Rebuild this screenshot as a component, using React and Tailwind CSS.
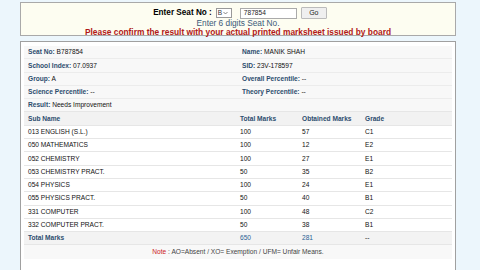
import React from "react";

const info = [
  [["Seat No:", "B787854"], ["Name:", "MANIK SHAH"]],
  [["School Index:", "07.0937"], ["SID:", "23V-178597"]],
  [["Group:", "A"], ["Overall Percentile:", "--"]],
  [["Science Percentile:", "--"], ["Theory Percentile:", "--"]],
];

const subjects = [
  ["013 ENGLISH (S.L.)", "100", "57", "C1"],
  ["050 MATHEMATICS", "100", "12", "E2"],
  ["052 CHEMISTRY", "100", "27", "E1"],
  ["053 CHEMISTRY PRACT.", "50", "35", "B2"],
  ["054 PHYSICS", "100", "24", "E1"],
  ["055 PHYSICS PRACT.", "50", "40", "B1"],
  ["331 COMPUTER", "100", "48", "C2"],
  ["332 COMPUTER PRACT.", "50", "38", "B1"],
];

const grid = "grid grid-cols-[212px_62px_63px_1fr] items-center h-[13.3px] border-b border-[#e6e6e6]";

export default function App() {
  return (
    <div
      className="w-[480px] h-[270px] bg-[#ecf6fc] overflow-hidden pt-[2px]"
      style={{ fontFamily: '"Liberation Sans", Arial, sans-serif' }}
    >
      <div className="ml-[20px] w-[436px] h-[34px] border border-[#a9a9a9] bg-[#fdfdf1] flex flex-col items-center">
        <div className="flex items-center mt-[4px] h-[12px] ml-[4px]">
          <span className="text-[8.2px] font-bold text-black mr-[4px]">Enter Seat No :</span>
          <div className="w-[16px] h-[10px] border border-[#999] bg-white flex items-center text-[6.5px] pl-[1px] text-[#333] mr-[8px]">
            <span>B</span>
            <svg width="5" height="4" viewBox="0 0 5 4" className="ml-[1px]"><path d="M0.5 1 L2.5 3 L4.5 1" fill="none" stroke="#555" strokeWidth="0.7" /></svg>
          </div>
          <div className="w-[57px] h-[11px] border border-[#aaa] bg-white flex items-center text-[6.6px] pl-[3px] text-[#222] mr-[4px]">787854</div>
          <div className="w-[26px] h-[12px] border border-[#bbb] rounded-[1px] bg-[#efefef] flex items-center justify-center text-[7px] text-[#222]">Go</div>
        </div>
        <div className="text-[8.3px] leading-[9px] text-[#3a5a78]">Enter 6 digits Seat No.</div>
        <div className="text-[8.35px] leading-[9px] font-bold text-[#b01818]">Please confirm the result with your actual printed marksheet issued by board</div>
      </div>

      <div className="ml-[20px] mt-[5px] w-[436px] h-[240px] border-l border-r border-t border-[#a0a0a0] bg-white pt-[4px] px-[3px]">
        <div className="w-[428px] bg-[#f8f8f8] text-[6.6px] text-[#111]">
          {info.map((row, i) => (
            <div key={i} className="grid grid-cols-2 items-center h-[13.3px] border-b border-[#ececec]">
              {row.map(([l, v], j) => (
                <div key={j} className="px-[4px]">
                  <span className="font-bold text-[#2d4d6e]">{l}</span> {v}
                </div>
              ))}
            </div>
          ))}
          <div className="flex items-center h-[13.3px] px-[4px] border-b border-[#e6e6e6]">
            <span className="font-bold text-[#2d4d6e]">Result:</span>&nbsp;Needs Improvement
          </div>
          <div className={grid + " bg-[#f2f2f2] font-bold text-[#2d4d6e]"}>
            <div className="px-[4px]">Sub Name</div>
            <div className="px-[4px]">Total Marks</div>
            <div className="px-[4px]">Obtained Marks</div>
            <div className="px-[4px]">Grade</div>
          </div>
          {subjects.map((s, i) => (
            <div key={i} className={grid + " bg-white"}>
              {s.map((c, j) => (
                <div key={j} className="px-[4px]">{c}</div>
              ))}
            </div>
          ))}
          <div className={grid + " bg-[#f3f3f3]"}>
            <div className="px-[4px] font-bold text-[#2d4d6e]">Total Marks</div>
            <div className="px-[4px] text-[#2a5f94]">650</div>
            <div className="px-[4px] text-[#2a5f94]">281</div>
            <div className="px-[4px]">--</div>
          </div>
          <div className="flex items-center justify-center h-[13.3px] bg-[#f8f8f8] text-[#444]">
            <span className="text-[#cc2222]">Note</span>&nbsp;: AO=Absent / XO= Exemption / UFM= Unfair Means.
          </div>
        </div>
      </div>
    </div>
  );
}
